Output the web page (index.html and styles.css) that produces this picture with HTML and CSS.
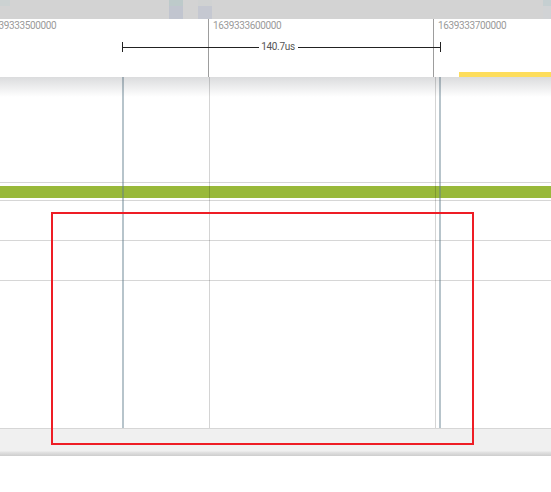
FILE: index.html
```html
<!DOCTYPE html>
<html>
<head>
<meta charset="utf-8">
<link rel="stylesheet" href="styles.css">
</head>
<body>
<div class="app">
  <div class="minimap">
    <span class="blk b1"></span>
    <span class="blk b2"></span>
    <span class="blk b3"></span>
    <span class="blk b4"></span>
  </div>
  <div class="ruler">
    <div class="ticks">
      <div class="tick">1639333500000</div>
      <div class="tick">1639333600000</div>
      <div class="tick">1639333700000</div>
    </div>
    <div class="measure">
      <span class="mline left"></span>
      <span class="mlabel">140.7us</span>
      <span class="mline right"></span>
    </div>
    <div class="slice-yellow"></div>
  </div>
  <div class="tracks">
    <div class="row row-a"></div>
    <div class="row row-b"><div class="band"></div></div>
    <div class="row row-c"></div>
    <div class="row row-d"></div>
    <div class="row row-e"></div>
    <div class="grid">
      <span class="gline"></span>
      <span class="gline"></span>
      <span class="gline"></span>
    </div>
    <span class="cursor c1"></span>
    <span class="cursor c2"></span>
  </div>
  <div class="footer"></div>
  <div class="selection"></div>
</div>
</body>
</html>
```

FILE: styles.css
```css
html, body {
  margin: 0;
  padding: 0;
  background: #ffffff;
}

body {
  font-family: Roboto, "Liberation Sans", sans-serif;
  width: 551px;
  height: 492px;
  overflow: hidden;
}

.app {
  position: relative;
  display: flex;
  flex-direction: column;
  width: 551px;
  overflow: hidden;
}

/* pixelated overview strip */
.minimap {
  position: relative;
  height: 19px;
  background: #d3d3d3;
  overflow: hidden;
}

.blk {
  position: absolute;
  display: block;
}

.b1 {
  left: 0;
  top: 0;
  width: 10px;
  height: 6px;
  background: #ccd2d2;
}

.b2 {
  left: 169px;
  top: 0;
  width: 14px;
  height: 19px;
  background: linear-gradient(#bdcaca 0, #bdcaca 6px, #c1c5cf 6px, #c1c5cf 100%);
}

.b3 {
  left: 198px;
  top: 0;
  width: 14px;
  height: 19px;
  background: linear-gradient(#d0d2d2 0, #d0d2d2 6px, #c5c8d1 6px, #c5c8d1 100%);
}

.b4 {
  left: 543px;
  top: 0;
  width: 8px;
  height: 19px;
  background: linear-gradient(#c5cfd1 0, #c5cfd1 6px, #d1d3d5 6px, #d1d3d5 100%);
}

/* time ruler */
.ruler {
  position: relative;
  height: 58px;
  background: #ffffff;
  z-index: 2;
}

.ruler::after {
  content: "";
  position: absolute;
  left: 0;
  right: 0;
  top: 100%;
  height: 20px;
  background: linear-gradient(rgba(40, 45, 55, 0.17), rgba(40, 45, 55, 0));
  pointer-events: none;
}

.ticks {
  display: flex;
  height: 100%;
  margin-left: -17px;
}

.tick {
  flex: none;
  width: 225px;
  box-sizing: border-box;
  border-left: 1px solid #9d9d9d;
  padding-left: 4px;
  padding-top: 1px;
  font-size: 10px;
  line-height: 12px;
  letter-spacing: -0.38px;
  color: #9a9a9a;
  white-space: nowrap;
}

.measure {
  position: absolute;
  left: 122px;
  top: 23px;
  width: 319px;
  height: 10px;
  box-sizing: border-box;
  border-left: 1px solid #222222;
  border-right: 1px solid #222222;
  display: flex;
  align-items: center;
}

.mline {
  height: 1px;
  background: #222222;
}

.mline.left {
  flex: 136 1 0;
}

.mline.right {
  flex: 142 1 0;
}

.mlabel {
  flex: none;
  padding: 0 3px 0 2px;
  font-size: 10px;
  line-height: 10px;
  letter-spacing: -0.3px;
  color: #555555;
}

.slice-yellow {
  position: absolute;
  right: 0;
  bottom: 0;
  width: 92px;
  height: 5px;
  background: #fddd5c;
}

/* track area */
.tracks {
  position: relative;
  display: flex;
  flex-direction: column;
  height: 351px;
}

.row {
  flex: none;
  box-sizing: border-box;
  border-bottom: 1px solid #d6d6d6;
}

.row-a {
  height: 106px;
}

.row-b {
  height: 18px;
  padding-top: 3px;
}

.band {
  height: 12px;
  background: #99b93a;
}

.row-c,
.row-d {
  height: 40px;
}

.row-e {
  flex: 1;
  border-bottom: none;
}

.grid {
  position: absolute;
  top: 0;
  bottom: 0;
  left: -17px;
  display: flex;
  pointer-events: none;
}

.gline {
  flex: none;
  width: 225px;
  border-left: 1px solid rgba(0, 0, 0, 0.17);
}

.cursor {
  position: absolute;
  top: 0;
  bottom: 0;
  width: 2px;
  background: rgba(95, 125, 140, 0.45);
}

.c1 {
  left: 122px;
}

.c2 {
  left: 439px;
}

/* bottom bar */
.footer {
  height: 28px;
  box-sizing: border-box;
  border-top: 1px solid #d6d6d6;
  background: linear-gradient(#f0f0f0 0, #f0f0f0 22px, #e3e3e3 23px, #cdcdcd 27px);
}

/* selection rectangle overlay */
.selection {
  position: absolute;
  left: 51px;
  top: 212px;
  width: 423px;
  height: 233px;
  box-sizing: border-box;
  border: 2px solid #ee1d25;
  pointer-events: none;
  z-index: 3;
}
```
